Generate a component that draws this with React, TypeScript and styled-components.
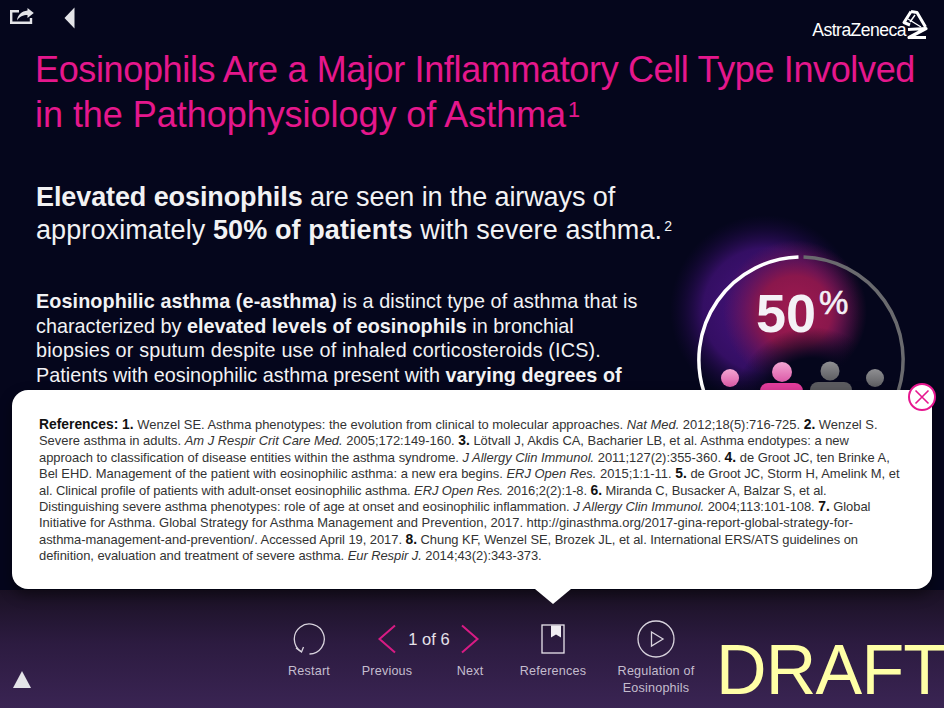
import React from 'react';
import styled, { createGlobalStyle } from 'styled-components';

const GlobalStyle = createGlobalStyle`
  html, body {
    margin: 0;
    padding: 0;
    background: #05061c;
  }
  body {
    font-family: "Liberation Sans", Arial, sans-serif;
  }
`;

const Page = styled.div`
  position: relative;
  width: 944px;
  height: 708px;
  overflow: hidden;
  display: flex;
  flex-direction: column;
  background: #05061c;
`;

const Main = styled.main`
  position: relative;
  flex: 1;
  min-height: 0;
  overflow: hidden;
`;

const TopBar = styled.header`
  display: flex;
  align-items: flex-start;
  justify-content: space-between;
  height: 40px;
  padding: 7px 16px 0 10px;
  box-sizing: border-box;
`;

const TopIcons = styled.div`
  display: flex;
  align-items: flex-start;
  gap: 30px;
`;

const Logo = styled.div`
  display: flex;
  align-items: flex-start;
  margin-top: 3px;
`;

const LogoName = styled.span`
  margin: 10px -4px 0 0;
  color: #fff;
  font-size: 17.6px;
  line-height: 21px;
  letter-spacing: -0.55px;
`;

const Line = styled.span<{ $spacing?: number }>`
  display: block;
  letter-spacing: ${({ $spacing }) => $spacing ?? 0}px;
`;

const Title = styled.h1`
  margin: 0;
  padding: 7px 0 0 35px;
  color: #e5178c;
  font-size: 36px;
  line-height: 45px;
  font-weight: 400;
  white-space: nowrap;
`;

const Sup = styled.sup<{ $scale: number; $lift: number }>`
  font-size: ${({ $scale }) => $scale}em;
  line-height: 0;
  vertical-align: baseline;
  position: relative;
  top: -${({ $lift }) => $lift}em;
  margin-left: 2px;
`;

const Lead = styled.p`
  margin: 44px 0 0;
  padding-left: 36px;
  color: #f2f2f4;
  font-size: 27px;
  line-height: 33px;
  white-space: nowrap;
`;

const Body = styled.p`
  margin: 42px 0 0;
  padding-left: 36px;
  color: #f2f2f4;
  font-size: 19.8px;
  line-height: 24.6px;
  white-space: nowrap;
`;

const StatGraphic = styled.svg`
  position: absolute;
  left: 620px;
  top: 200px;
`;

const StatNumber = styled.div`
  position: absolute;
  left: 756px;
  top: 283px;
  display: flex;
  align-items: flex-start;
  color: #f4f1f6;
  font-weight: 700;
`;

const StatValue = styled.span`
  font-size: 54px;
  line-height: 60px;
`;

const StatPercent = styled.span`
  margin: 3px 0 0 3px;
  font-size: 33px;
  line-height: 33px;
  font-weight: 400;
  -webkit-text-stroke: 0.6px #f4f1f6;
`;

const Popup = styled.aside`
  position: absolute;
  left: 12px;
  top: 390px;
  width: 920px;
  height: 199px;
  box-sizing: border-box;
  padding: 27px 20px 0 27px;
  background: #fff;
  border-radius: 16px;
  color: #333;
  font-size: 12.95px;
  line-height: 16.4px;
  white-space: nowrap;
  box-shadow: 0 6px 14px rgba(0, 0, 0, 0.45);

  b {
    color: #111;
    font-size: 1.07em;
    line-height: 0;
  }
`;

const PopupTail = styled.div`
  position: absolute;
  left: 523px;
  bottom: -15px;
  width: 0;
  height: 0;
  border-left: 18px solid transparent;
  border-right: 18px solid transparent;
  border-top: 15px solid #fff;
`;

const CloseButton = styled.button`
  position: absolute;
  right: -4px;
  top: -7px;
  width: 28px;
  height: 28px;
  padding: 0;
  display: flex;
  align-items: center;
  justify-content: center;
  background: #fff;
  border: 2px solid #e6178f;
  border-radius: 50%;
`;

const Footer = styled.footer`
  position: relative;
  height: 118px;
  flex: none;
  box-sizing: border-box;
  padding: 24px 0 0 289px;
  display: flex;
  background: linear-gradient(#1a1124, #2c1b40 45%, #3a2453);
`;

const NavItem = styled.div<{ $gap?: number }>`
  display: flex;
  flex-direction: column;
  align-items: center;
  width: 40px;
  margin-left: ${({ $gap }) => $gap ?? 0}px;
`;

const IconSlot = styled.div`
  height: 49px;
  display: flex;
  align-items: center;
  justify-content: center;
`;

const Label = styled.span`
  color: #c4bdce;
  font-size: 12.6px;
  line-height: 17px;
  letter-spacing: 0.2px;
  text-align: center;
  white-space: nowrap;
`;

const PageCount = styled.span`
  color: #e6e2ea;
  font-size: 16.5px;
  line-height: 20px;
  white-space: nowrap;
`;

const UpTriangle = styled.div`
  position: absolute;
  left: 13px;
  top: 81px;
  width: 0;
  height: 0;
  border-left: 9.5px solid transparent;
  border-right: 9.5px solid transparent;
  border-bottom: 17px solid #e4e4e8;
`;

const Draft = styled.div`
  position: absolute;
  left: 716px;
  top: 40px;
  color: #ffffa6;
  font-size: 70px;
  line-height: 80px;
  letter-spacing: -0.8px;
`;

const ShareIcon = () => (
  <svg width="24" height="18" viewBox="0 0 24 18" fill="none">
    <path d="M9 4.2H1.2V15.8H21V11" stroke="#e4e4e8" strokeWidth="2.4" />
    <path d="M17.5 1 23.8 6 17.5 11V8C13 8 9.5 9.5 7 13.5 7.5 8.5 11.5 4.2 17.5 3.6Z" fill="#e4e4e8" />
  </svg>
);

const BackIcon = () => (
  <svg width="11" height="22" viewBox="0 0 11 22">
    <path d="M10.5 0.5V21.5L0.5 11Z" fill="#e4e4e8" />
  </svg>
);

const LogoMark = () => (
  <svg width="26" height="31" viewBox="0 0 26 31" fill="none" stroke="#fff" strokeLinejoin="round">
    <path d="M9 1.5 2 12.5 8 15" strokeWidth="3" />
    <path d="M9 1.5 15 2.5 23.5 17" strokeWidth="3" />
    <path d="M6 9 19 17M13 5 8 12" strokeWidth="1.4" />
    <path d="M6 19.5 24 18.5 7 27.5H24" strokeWidth="3.2" />
  </svg>
);

interface PersonProps {
  x: number;
  y: number;
  r: number;
  bodyX: number;
  bodyW: number;
  bodyTop: number;
  head: string;
  body: string;
}

const Person = ({ x, y, r, bodyX, bodyW, bodyTop, head, body }: PersonProps) => (
  <g>
    <circle cx={x} cy={y} r={r} fill={`url(#${head})`} />
    <rect x={bodyX} y={bodyTop} width={bodyW} height="30" rx="8" fill={body} />
  </g>
);

const Stat = () => (
  <StatGraphic width="324" height="210" viewBox="620 200 324 210">
    <defs>
      <radialGradient id="glowRed" cx="795" cy="312" r="72" gradientUnits="userSpaceOnUse">
        <stop offset="0" stopColor="#a01a50" />
        <stop offset="0.5" stopColor="#8a174c" />
        <stop offset="1" stopColor="#6a1450" stopOpacity="0" />
      </radialGradient>
      <radialGradient id="glowPurple" cx="765" cy="310" r="95" gradientUnits="userSpaceOnUse">
        <stop offset="0" stopColor="#4c1484" />
        <stop offset="0.65" stopColor="#3c1070" stopOpacity="0.85" />
        <stop offset="1" stopColor="#1c0844" stopOpacity="0" />
      </radialGradient>
      <radialGradient id="floorFade" cx="812" cy="405" r="78" gradientUnits="userSpaceOnUse">
        <stop offset="0" stopColor="#05061c" />
        <stop offset="0.6" stopColor="#05061c" />
        <stop offset="1" stopColor="#05061c" stopOpacity="0" />
      </radialGradient>
      <linearGradient id="pinkHead" x1="0" y1="0" x2="0" y2="1">
        <stop offset="0" stopColor="#f2a6d2" />
        <stop offset="1" stopColor="#dc5aa8" />
      </linearGradient>
      <linearGradient id="grayHead" x1="0" y1="0" x2="0" y2="1">
        <stop offset="0" stopColor="#8f8f92" />
        <stop offset="1" stopColor="#5e5e62" />
      </linearGradient>
    </defs>
    <circle cx="765" cy="310" r="95" fill="url(#glowPurple)" />
    <circle cx="795" cy="312" r="72" fill="url(#glowRed)" />
    <circle cx="812" cy="405" r="78" fill="url(#floorFade)" />
    <path d="M798.5 257A103 103 0 0 0 704 392" fill="none" stroke="#fff" strokeWidth="3.5" />
    <path d="M803.5 257A103 103 0 0 1 898 392" fill="none" stroke="#6a6a6e" strokeWidth="3.5" />
    <Person x={730} y={378} r={9} bodyX={715} bodyW={33} bodyTop={390} head="pinkHead" body="#e33c9c" />
    <Person x={782} y={372} r={10} bodyX={760} bodyW={43} bodyTop={383} head="pinkHead" body="#e33c9c" />
    <Person x={830} y={371} r={9.5} bodyX={810} bodyW={42} bodyTop={382} head="grayHead" body="#5c5c60" />
    <Person x={875} y={378} r={9} bodyX={858} bodyW={33} bodyTop={390} head="grayHead" body="#5c5c60" />
  </StatGraphic>
);

const CloseIcon = () => (
  <svg width="16" height="16" viewBox="0 0 16 16" stroke="#e6178f" strokeWidth="1.6">
    <path d="M1.5 1.5 14.5 14.5M14.5 1.5 1.5 14.5" />
  </svg>
);

const RestartIcon = () => (
  <svg width="34" height="34" viewBox="0 0 34 34" fill="none" stroke="#d8d3dd" strokeWidth="1.3">
    <path d="M9 29.5A15 15 0 1 1 17.5 32" />
    <path d="M4 26 9.5 30 11.5 25" />
  </svg>
);

const ChevronLeft = () => (
  <svg width="20" height="30" viewBox="0 0 20 30" fill="none" stroke="#d81b84" strokeWidth="2">
    <path d="M18 1.5 2.5 15 18 28.5" />
  </svg>
);

const ChevronRight = () => (
  <svg width="20" height="30" viewBox="0 0 20 30" fill="none" stroke="#d81b84" strokeWidth="2">
    <path d="M2 1.5 17.5 15 2 28.5" />
  </svg>
);

const BookIcon = () => (
  <svg width="24" height="30" viewBox="0 0 24 30" fill="none">
    <rect x="1" y="1" width="22" height="28" stroke="#e8e4ec" strokeWidth="1.3" />
    <path d="M10 1.5H20V13.5L15 10.5 10 13.5Z" fill="#f0edf2" />
  </svg>
);

const PlayIcon = () => (
  <svg width="38" height="38" viewBox="0 0 38 38" fill="none" stroke="#d8d3dd" strokeWidth="1.3">
    <circle cx="19" cy="19" r="18" />
    <path d="M14.5 12 26 19 14.5 26Z" />
  </svg>
);

export default function App() {
  return (
    <Page>
      <GlobalStyle />
      <Main>
        <TopBar>
          <TopIcons>
            <ShareIcon />
            <BackIcon />
          </TopIcons>
          <Logo>
            <LogoName>AstraZeneca</LogoName>
            <LogoMark />
          </Logo>
        </TopBar>
        <Title>
          <Line $spacing={-0.36}>Eosinophils Are a Major Inflammatory Cell Type Involved</Line>
          <Line $spacing={-0.04}>
            in the Pathophysiology of Asthma<Sup $scale={0.6} $lift={0.45}>1</Sup>
          </Line>
        </Title>
        <Lead>
          <Line $spacing={-0.1}><b>Elevated eosinophils</b> are seen in the airways of</Line>
          <Line $spacing={0.1}>
            approximately <b>50% of patients</b> with severe asthma.<Sup $scale={0.52} $lift={0.57}>2</Sup>
          </Line>
        </Lead>
        <Body>
          <Line $spacing={0.1}><b>Eosinophilic asthma (e-asthma)</b> is a distinct type of asthma that is</Line>
          <Line $spacing={0.02}>characterized by <b>elevated levels of eosinophils</b> in bronchial</Line>
          <Line $spacing={0.17}>biopsies or sputum despite use of inhaled corticosteroids (ICS).</Line>
          <Line $spacing={0.01}>Patients with eosinophilic asthma present with <b>varying degrees of</b></Line>
        </Body>
        <Stat />
        <StatNumber>
          <StatValue>50</StatValue>
          <StatPercent>%</StatPercent>
        </StatNumber>
      </Main>
      <Footer>
        <NavItem>
          <IconSlot><RestartIcon /></IconSlot>
          <Label>Restart</Label>
        </NavItem>
        <NavItem $gap={38}>
          <IconSlot><ChevronLeft /></IconSlot>
          <Label>Previous</Label>
        </NavItem>
        <NavItem $gap={2}>
          <IconSlot><PageCount>1 of 6</PageCount></IconSlot>
        </NavItem>
        <NavItem $gap={1}>
          <IconSlot><ChevronRight /></IconSlot>
          <Label>Next</Label>
        </NavItem>
        <NavItem $gap={43}>
          <IconSlot><BookIcon /></IconSlot>
          <Label>References</Label>
        </NavItem>
        <NavItem $gap={63}>
          <IconSlot><PlayIcon /></IconSlot>
          <Label>
            Regulation of
            <br />
            Eosinophils
          </Label>
        </NavItem>
        <UpTriangle />
        <Draft>DRAFT</Draft>
      </Footer>
      <Popup>
        <Line><b>References: 1.</b> Wenzel SE. Asthma phenotypes: the evolution from clinical to molecular approaches. <i>Nat Med.</i> 2012;18(5):716-725. <b>2.</b> Wenzel S.</Line>
        <Line $spacing={-0.01}>Severe asthma in adults. <i>Am J Respir Crit Care Med.</i> 2005;172:149-160. <b>3.</b> Lötvall J, Akdis CA, Bacharier LB, et al. Asthma endotypes: a new</Line>
        <Line $spacing={-0.01}>approach to classification of disease entities within the asthma syndrome. <i>J Allergy Clin Immunol.</i> 2011;127(2):355-360. <b>4.</b> de Groot JC, ten Brinke A,</Line>
        <Line>Bel EHD. Management of the patient with eosinophilic asthma: a new era begins. <i>ERJ Open Res.</i> 2015;1:1-11. <b>5.</b> de Groot JC, Storm H, Amelink M, et</Line>
        <Line $spacing={-0.065}>al. Clinical profile of patients with adult-onset eosinophilic asthma. <i>ERJ Open Res.</i> 2016;2(2):1-8. <b>6.</b> Miranda C, Busacker A, Balzar S, et al.</Line>
        <Line $spacing={-0.04}>Distinguishing severe asthma phenotypes: role of age at onset and eosinophilic inflammation. <i>J Allergy Clin Immunol.</i> 2004;113:101-108. <b>7.</b> Global</Line>
        <Line>Initiative for Asthma. Global Strategy for Asthma Management and Prevention, 2017. http://ginasthma.org/2017-gina-report-global-strategy-for-</Line>
        <Line $spacing={-0.04}>asthma-management-and-prevention/. Accessed April 19, 2017. <b>8.</b> Chung KF, Wenzel SE, Brozek JL, et al. International ERS/ATS guidelines on</Line>
        <Line $spacing={-0.05}>definition, evaluation and treatment of severe asthma. <i>Eur Respir J.</i> 2014;43(2):343-373.</Line>
        <PopupTail />
        <CloseButton aria-label="Close"><CloseIcon /></CloseButton>
      </Popup>
    </Page>
  );
}
